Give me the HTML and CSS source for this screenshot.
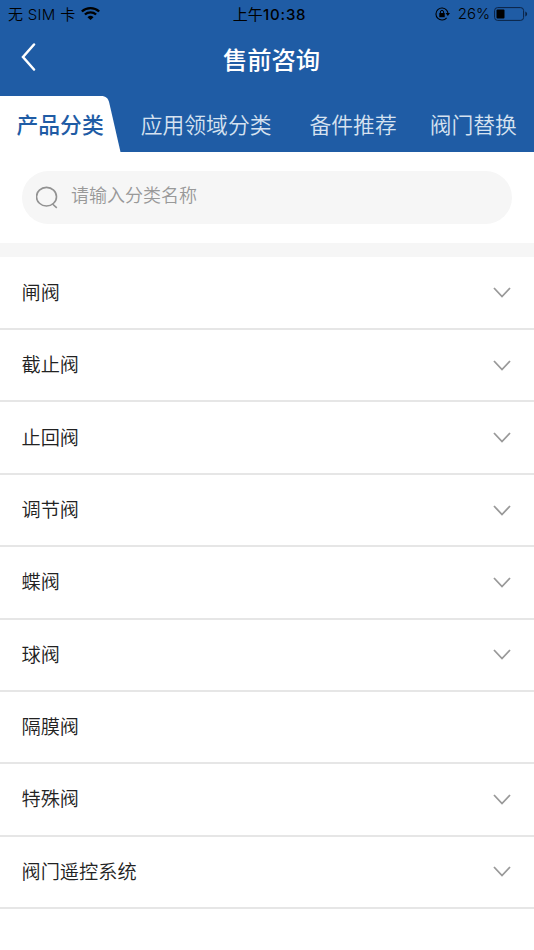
FILE: index.html
```html
<!DOCTYPE html>
<html lang="zh-CN">
<head>
    <meta charset="UTF-8">
    <meta name="viewport" content="width=device-width, initial-scale=1.0">
    <title>售前咨询</title>
    <link rel="stylesheet" href="styles.css">
</head>
<body>
    <header class="header">
        <div class="status-bar">
            <div class="status-left">
                <span>无 SIM 卡</span>
                <svg class="wifi" width="19" height="13" viewBox="0 0 18 13" preserveAspectRatio="none">
                    <path d="M.8 4.500a11.700 11.700 0 0 1 16.400 0M3.700 7.500a7.600 7.600 0 0 1 10.600 0" fill="none" stroke="#000" stroke-width="2.200"/>
                    <path d="M6.100 10.200a4.200 4.200 0 0 1 5.800 0L9 13z"/>
                </svg>
            </div>
            <div class="status-time"><span class="ampm">上午</span>10:38</div>
            <div class="status-right">
                <svg width="15" height="14" viewBox="0 0 15 14">
                    <path d="M11.600 3.200A6 6 0 1 0 11.600 10.800M11.600 3.200A6 6 0 0 1 13 6.500" fill="none" stroke="#000" stroke-width="1.1"/>
                    <path d="M10.600 6h4.400l-2.200 3z"/>
                    <rect x="4.300" y="6" width="5.400" height="4.200"/>
                    <path d="M5.400 6.200V5a1.600 1.600 0 0 1 3.200 0v1.200" fill="none" stroke="#000"/>
                </svg>
                <span class="percent">26%</span>
                <svg width="34" height="14" viewBox="0 0 34 14">
                    <rect x=".6" y=".6" width="29" height="12.800" rx="3" fill="none" stroke="#0b2344" stroke-width="1"/>
                    <rect x="2.500" y="2.500" width="8" height="9" rx="1"/>
                    <path d="M31.300 4.500c2.400 1 2.400 4 0 5z" fill="#0b2344"/>
                </svg>
            </div>
        </div>
        <div class="title-bar">
            <svg class="back" width="16" height="28" viewBox="0 0 16 28">
                <path d="M14 1.500 3 14l11 12.500" fill="none" stroke="#fff" stroke-width="2.500" stroke-linecap="round"/>
            </svg>
            <h1>售前咨询</h1>
        </div>
        <nav class="tabs">
            <svg class="tab-shape" width="122" height="56" viewBox="0 0 122 56">
                <path d="M0 0h101c5 0 7 2 8.300 7L120.500 56H0z" fill="#fff"/>
            </svg>
            <a class="tab active">产品分类</a>
            <a class="tab tab-field">应用领域分类</a>
            <a class="tab tab-parts">备件推荐</a>
            <a class="tab tab-replace">阀门替换</a>
        </nav>
    </header>

    <div class="search">
        <div class="search-box">
            <svg width="24" height="24" viewBox="0 0 24 24" fill="none" stroke="#929292" stroke-width="1.600">
                <ellipse cx="10.500" cy="10.700" rx="10" ry="9.300"/>
                <path d="M16.500 18l4.300 3.800"/>
            </svg>
            <span>请输入分类名称</span>
        </div>
    </div>

    <ul class="list" id="list"></ul>

    <script>
        const categories = [
            { name: '闸阀', more: true },
            { name: '截止阀', more: true },
            { name: '止回阀', more: true },
            { name: '调节阀', more: true },
            { name: '蝶阀', more: true },
            { name: '球阀', more: true },
            { name: '隔膜阀', more: false },
            { name: '特殊阀', more: true },
            { name: '阀门遥控系统', more: true }
        ];
        const arrow = '<svg width="18" height="11" viewBox="0 0 18 11"><path d="M1 1l8 8.500L17 1" fill="none" stroke="#999" stroke-width="1.8"/></svg>';

        document.getElementById('list').innerHTML = categories.map(item =>
            `<li class="item"><span>${item.name}</span>${item.more ? arrow : ''}</li>`
        ).join('');
    </script>
</body>
</html>
```

FILE: styles.css
```css
* {
    box-sizing: border-box;
}

body {
    margin: 0;
    background-color: #fff;
    color: #222;
    font-family: "Noto Sans CJK SC", sans-serif;
    height: 950px;
    overflow: hidden;
}

svg {
    display: block;
    flex-shrink: 0;
}

.header {
    height: 152px;
    background-color: #1f5ca5;
}

.status-bar {
    display: grid;
    grid-template-columns: 1fr auto 1fr;
    align-items: center;
    height: 27px;
    padding: 0 6px 0 8px;
    color: #000;
    font-family: Inter, "Noto Sans CJK SC", sans-serif;
    font-size: 15px;
}

.status-left,
.status-right {
    display: flex;
    align-items: center;
}

.status-left {
    font-weight: 350;
    letter-spacing: .3px;
}

.status-right {
    justify-content: flex-end;
}

.wifi {
    margin-left: 6px;
}

.percent {
    margin: 0 4px 0 8px;
    font-weight: 350;
}

.status-time {
    margin-left: 3px;
    font-weight: 500;
    letter-spacing: .8px;
}

.ampm {
    font-weight: 400;
    letter-spacing: .2px;
}

.title-bar {
    display: grid;
    grid-template-columns: 1fr auto 1fr;
    align-items: center;
    height: 69px;
    color: #fff;
}

.back {
    margin: -10px 0 0 20px;
}

h1 {
    margin: -6px 0 0 9px;
    font-size: 24.3px;
    font-weight: 500;
    line-height: 36px;
}

.tabs {
    position: relative;
    display: flex;
    height: 56px;
    padding-left: 16.500px;
    line-height: 56px;
    font-size: 21.8px;
    font-weight: 350;
    color: #d6e2f0;
    white-space: nowrap;
}

.tab-shape {
    position: absolute;
    left: 0;
    top: 0;
}

.tab {
    position: relative;
}

.tab.active {
    color: #1f5ca5;
    font-weight: 500;
}

.tab-field {
    margin-left: 37px;
}

.tab-parts {
    margin-left: 38px;
}

.tab-replace {
    margin-left: 33px;
}

.search {
    padding: 19px 22px;
    border-bottom: 14px solid #f6f6f6;
}

.search-box {
    display: flex;
    align-items: center;
    height: 53px;
    padding-left: 14px;
    border-radius: 27px;
    background-color: #f6f6f6;
    color: #999;
    font-size: 18px;
    font-weight: 350;
}

.search-box span {
    margin: -7px 0 0 11px;
}

.list {
    margin: 0;
    padding: .8px 0 0;
    list-style: none;
}

.item {
    display: flex;
    align-items: center;
    justify-content: space-between;
    height: 72.35px;
    padding: 0 23px 0 21.5px;
    border-bottom: 2px solid #e6e6e6;
    font-size: 19.2px;
    font-weight: 350;
}

.item span {
    margin-top: -2px;
}
```
